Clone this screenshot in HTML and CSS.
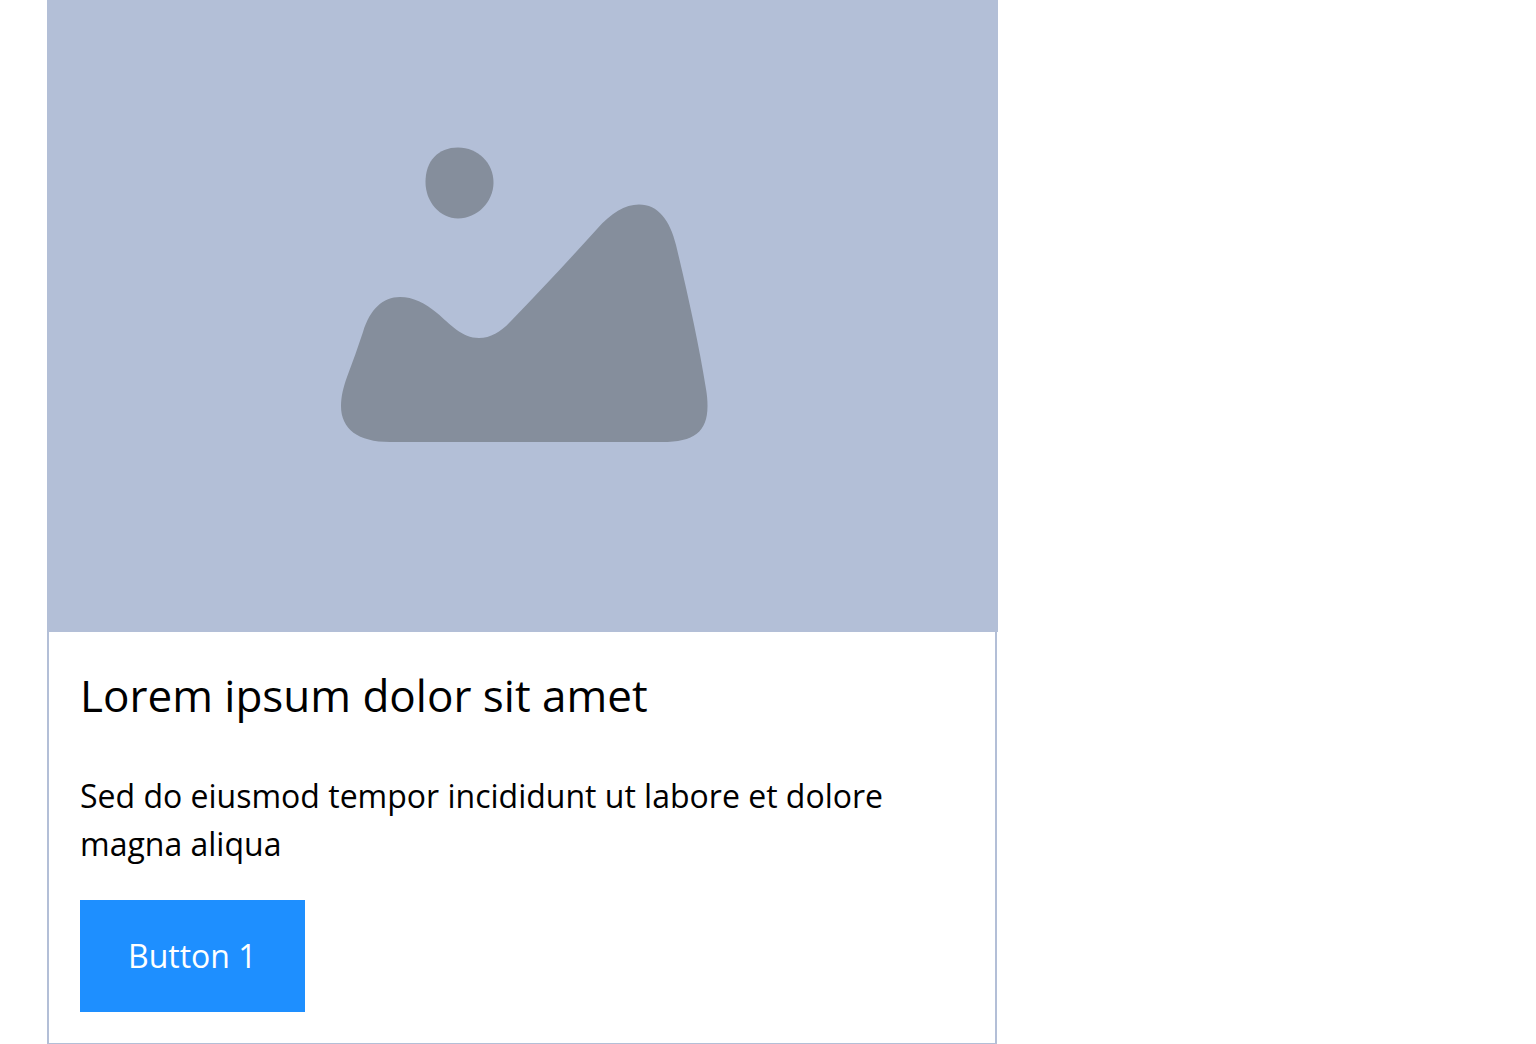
FILE: index.html
```
<!DOCTYPE html>
<html lang="en">
<head>
    <meta charset="UTF-8">
    <meta name="viewport" content="width=device-width, initial-scale=1.0">
    <title>Card</title>
    <link rel="stylesheet" href="styles.css">
</head>
<body>
    <div class="card">
        <div class="card-image">
            <svg viewBox="0 0 951 632" role="img" aria-label="Placeholder image">
                <path d="M411 147.500C431 147.500 446.500 163 446.500 182.500C446.500 202 430 218.500 411 218.500C393 218.500 378.500 202 378.500 182C378.500 161 391 147.500 411 147.500Z"/>
                <path d="M316 332C323 309 336 297 353 297C366 297 378 303 390 313C403 324 415 338 432 338C444 338 454 332 464 321C493 291 522 260 550 229C564 213 578 204.500 592 204.500C611 204.500 623 220 629 245C641 295 652 345 659 389C660 395 660.500 400 660.500 406C660.500 432 647 442 615 442H343C311 442 294 429 294 406C294 397 296 388 300 377C306 361 311 347 316 332Z"/>
            </svg>
        </div>
        <div class="card-content">
            <h2>Lorem ipsum dolor sit amet</h2>
            <p>Sed do eiusmod tempor incididunt ut labore et dolore magna aliqua</p>
            <button type="button" class="btn">Button 1</button>
        </div>
    </div>
</body>
</html>
```
FILE: styles.css
```
* {
    box-sizing: border-box;
    margin: 0;
    padding: 0;
}

body {
    font-family: "Open Sans", sans-serif;
    font-size: 32px;
    line-height: 48px;
    color: #000;
    background: #fff;
    padding: 0 48px;
}

/* The frame is centered on the edge of the card */
.card {
    max-width: 948px;
    outline: 2px solid #b3bfd7;
    outline-offset: -1px;
}

/* Image covers the frame on both sides */
.card-image {
    margin: 0 -2px 0 -1px;
    background: #b3bfd7;
}

.card-image svg {
    display: block;
    width: 100%;
    fill: #858e9c;
}

.card-content {
    padding: 32px;
}

.card-content h2 {
    font-size: 44px;
    font-weight: 400;
    line-height: 62px;
    margin-bottom: 46px;
}

.card-content p {
    margin-bottom: 32px;
}

/* Button */
.btn {
    display: block;
    font-family: inherit;
    font-size: 32px;
    line-height: 48px;
    color: #fff;
    background: #1e8fff;
    border: none;
    padding: 32px 48px;
    cursor: pointer;
}
```
